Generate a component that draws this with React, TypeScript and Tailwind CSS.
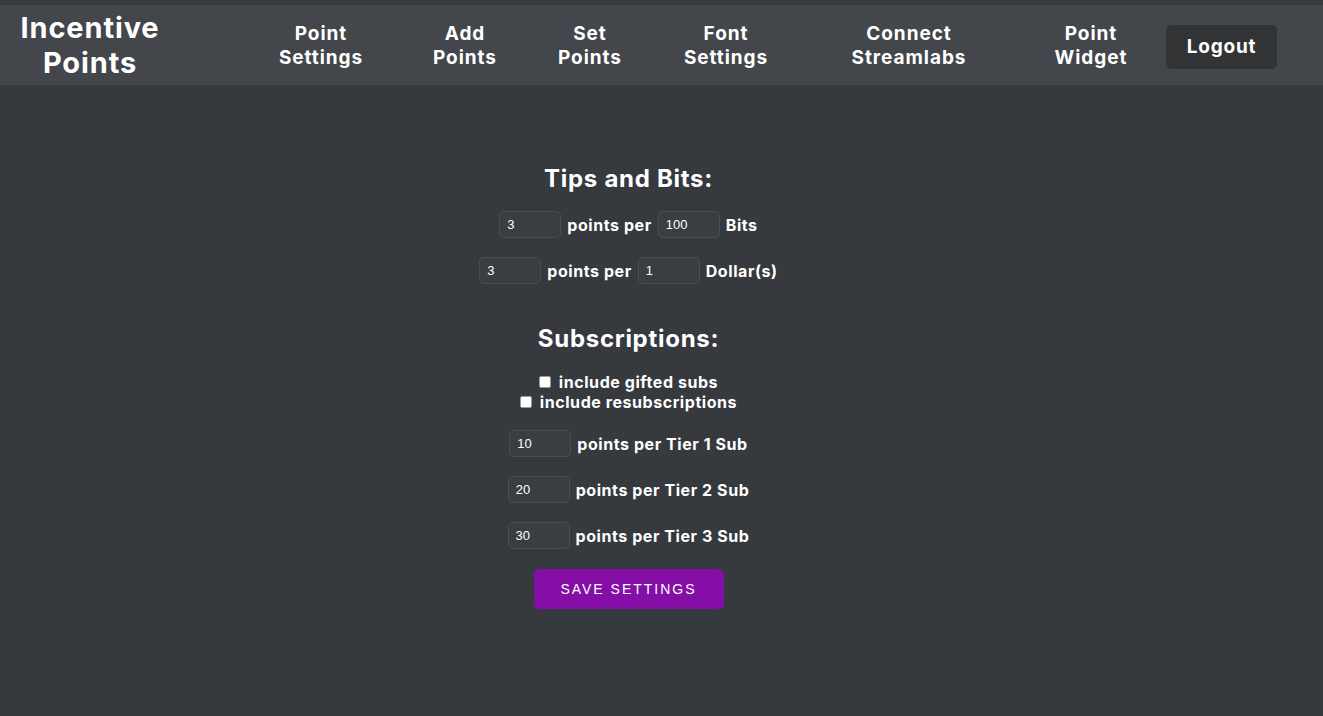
import { useState } from 'react';

const font = { fontFamily: 'Inter, "Open Sans", sans-serif' };

const navItems = [
  { top: 'Point', bottom: 'Settings', w: 'w-[120px]', ml: 'ml-[81px]' },
  { top: 'Add', bottom: 'Points', w: 'w-[100px]', ml: 'ml-[34px]' },
  { top: 'Set', bottom: 'Points', w: 'w-[100px]', ml: 'ml-[25px]' },
  { top: 'Font', bottom: 'Settings', w: 'w-[120px]', ml: 'ml-[26px]' },
  { top: 'Connect', bottom: 'Streamlabs', w: 'w-[140px]', ml: 'ml-[53px]' },
  { top: 'Point', bottom: 'Widget', w: 'w-[100px]', ml: 'ml-[62px]' },
];

function NumInput({ value }: { value: string }) {
  const [v, setV] = useState(value);
  return (
    <input
      value={v}
      onChange={(e) => setV(e.target.value)}
      className="w-[62px] h-[27px] rounded-[5px] border border-[#4b4d52] bg-[#3a3d42] px-[7px] text-[13px] font-normal tracking-normal text-white outline-none font-['Liberation_Sans',Arial,sans-serif]"
    />
  );
}

function Check({ label }: { label: string }) {
  return (
    <label className="flex items-center gap-[8px] leading-[20px]">
      <input type="checkbox" className="h-[12px] w-[12px] appearance-none rounded-[2px] border border-[#9a9a9a] bg-white" />
      {label}
    </label>
  );
}

export default function App() {
  return (
    <div className="min-h-[716px] bg-[#36393e] pt-[5px] text-white" style={font}>
      <nav className="flex h-[80px] items-center bg-[#43464b]">
        <div className="w-[180px] text-center text-[29px] font-bold leading-[35px] tracking-[0.03em]">
          Incentive
          <br />
          Points
        </div>
        {navItems.map((item) => (
          <a key={item.bottom + item.top} className={`${item.w} ${item.ml} mt-[2px] cursor-pointer text-center text-[19px] font-bold leading-[24px] tracking-[0.05em]`}>
            {item.top}
            <br />
            {item.bottom}
          </a>
        ))}
        <button className="ml-[25px] mt-[4px] h-[44px] w-[111px] rounded-[5px] bg-[#323335] text-[19px] font-bold tracking-[0.04em]">Logout</button>
      </nav>

      <main className="flex flex-col items-center pr-[66px] pt-[79px] text-[16px] font-bold tracking-[0.035em]">
        <h2 className="text-[24px] font-bold leading-[30px] tracking-[0.03em]">Tips and Bits:</h2>
        <div className="mt-[17px] flex items-center gap-[6px]">
          <NumInput value="3" />
          <span>points per</span>
          <NumInput value="100" />
          <span>Bits</span>
        </div>
        <div className="mt-[19px] flex items-center gap-[6px]">
          <NumInput value="3" />
          <span>points per</span>
          <NumInput value="1" />
          <span>Dollar(s)</span>
        </div>

        <h2 className="mt-[40px] text-[24px] font-bold leading-[30px] tracking-[0.03em]">Subscriptions:</h2>
        <div className="mt-[18px] flex flex-col items-center">
          <Check label="include gifted subs" />
          <Check label="include resubscriptions" />
        </div>

        <div className="mt-[18px] flex items-center gap-[6px]">
          <NumInput value="10" />
          <span>points per Tier 1 Sub</span>
        </div>
        <div className="mt-[19px] flex items-center gap-[6px]">
          <NumInput value="20" />
          <span>points per Tier 2 Sub</span>
        </div>
        <div className="mt-[19px] flex items-center gap-[6px]">
          <NumInput value="30" />
          <span>points per Tier 3 Sub</span>
        </div>

        <button className="mt-[20px] h-[40px] w-[190px] rounded-[5px] bg-[#850ea6] text-[14px] font-normal tracking-[2px] font-['Liberation_Sans',Arial,sans-serif]">
          SAVE SETTINGS
        </button>
      </main>
    </div>
  );
}
